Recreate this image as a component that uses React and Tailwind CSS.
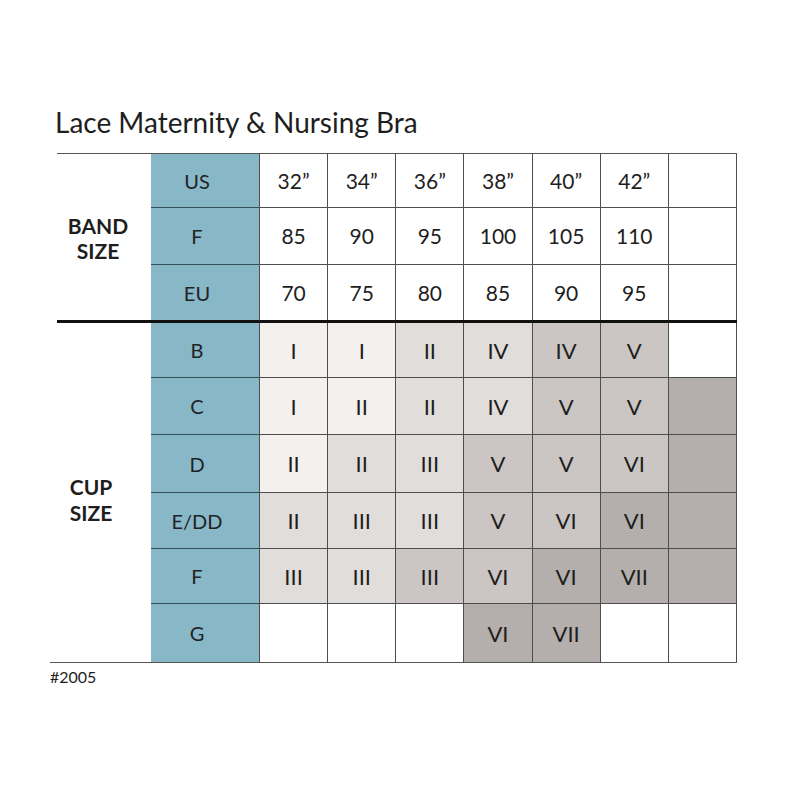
import React from "react";

const font = { fontFamily: "Lato, 'Open Sans', sans-serif" };

const levels = {
  0: "bg-white",
  1: "bg-[#f3f0ee]",
  2: "bg-[#e1ddda]",
  3: "bg-[#cbc6c3]",
  4: "bg-[#b4afac]",
};

const bandRows = [
  { label: "US", h: "h-[54px]", cells: ["32”", "34”", "36”", "38”", "40”", "42”", ""] },
  { label: "F", h: "h-[57px]", cells: ["85", "90", "95", "100", "105", "110", ""] },
  { label: "EU", h: "h-[55px]", cells: ["70", "75", "80", "85", "90", "95", ""], last: true },
];

const cupRows = [
  { label: "B", h: "h-[55px]", cells: ["I", "I", "II", "IV", "IV", "V", ""], lv: [1, 1, 2, 2, 3, 3, 0] },
  { label: "C", h: "h-[57px]", cells: ["I", "II", "II", "IV", "V", "V", ""], lv: [1, 1, 2, 2, 3, 3, 4] },
  { label: "D", h: "h-[58px]", cells: ["II", "II", "III", "V", "V", "VI", ""], lv: [1, 2, 2, 3, 3, 3, 4] },
  { label: "E/DD", h: "h-[56px]", cells: ["II", "III", "III", "V", "VI", "VI", ""], lv: [2, 2, 2, 3, 3, 4, 4] },
  { label: "F", h: "h-[55px]", cells: ["III", "III", "III", "VI", "VI", "VII", ""], lv: [2, 2, 3, 3, 4, 4, 4] },
  { label: "G", h: "h-[58px]", cells: ["", "", "", "VI", "VII", "", ""], lv: [0, 0, 0, 4, 4, 0, 0], last: true },
];

function Row({ row, roman }) {
  return (
    <div className={`flex ${row.h}`}>
      <div
        className={`w-[108px] shrink-0 bg-[#88b7c8] flex items-center justify-center pr-[16px] text-[20px] text-[#1f2326] ${
          row.last ? "" : "border-b border-[#34505b]"
        }`}
      >
        {row.label}
      </div>
      {row.cells.map((c, i) => (
        <div
          key={i}
          className={`flex-1 flex items-center justify-center text-[#1e1e1e] border-l border-[#4d4d4d] ${
            roman ? "text-[22px]" : "text-[21px]"
          } ${row.last ? "" : "border-b"} ${i === 6 ? "border-r" : ""} ${levels[row.lv ? row.lv[i] : 0]}`}
        >
          {c}
        </div>
      ))}
    </div>
  );
}

export default function App() {
  return (
    <div className="w-[800px] h-[800px] bg-white pt-[106px]" style={font}>
      <h1 className="ml-[55px] text-[28px] leading-[32px] text-[#1e1e1e]">
        Lace Maternity &amp; Nursing Bra
      </h1>

      <div className="ml-[57px] mt-[15px] w-[680px]">
        {/* band size */}
        <div className="flex border-t border-[#555]">
          <div className="w-[94px] shrink-0 flex items-center justify-center pr-[12px]">
            <div className="text-[21px] font-bold leading-[25px] text-center text-[#1e1e1e] pt-[2px]">
              BAND
              <br />
              SIZE
            </div>
          </div>
          <div className="flex-1">
            {bandRows.map((r) => (
              <Row key={r.label} row={r} />
            ))}
          </div>
        </div>

        <div className="h-[3px] bg-[#111]" />

        {/* cup size */}
        <div className="flex">
          <div className="w-[94px] shrink-0 flex items-center justify-center pr-[26px]">
            <div className="text-[21px] font-bold leading-[26px] text-center text-[#1e1e1e] pt-[14px]">
              CUP
              <br />
              SIZE
            </div>
          </div>
          <div className="flex-1">
            {cupRows.map((r) => (
              <Row key={r.label} row={r} roman />
            ))}
          </div>
        </div>

        <div className="-ml-[7px] w-[687px] h-px bg-[#555]" />
        <div className="-ml-[7px] mt-[4px] text-[16px] leading-[20px] text-[#1e1e1e]">#2005</div>
      </div>
    </div>
  );
}
